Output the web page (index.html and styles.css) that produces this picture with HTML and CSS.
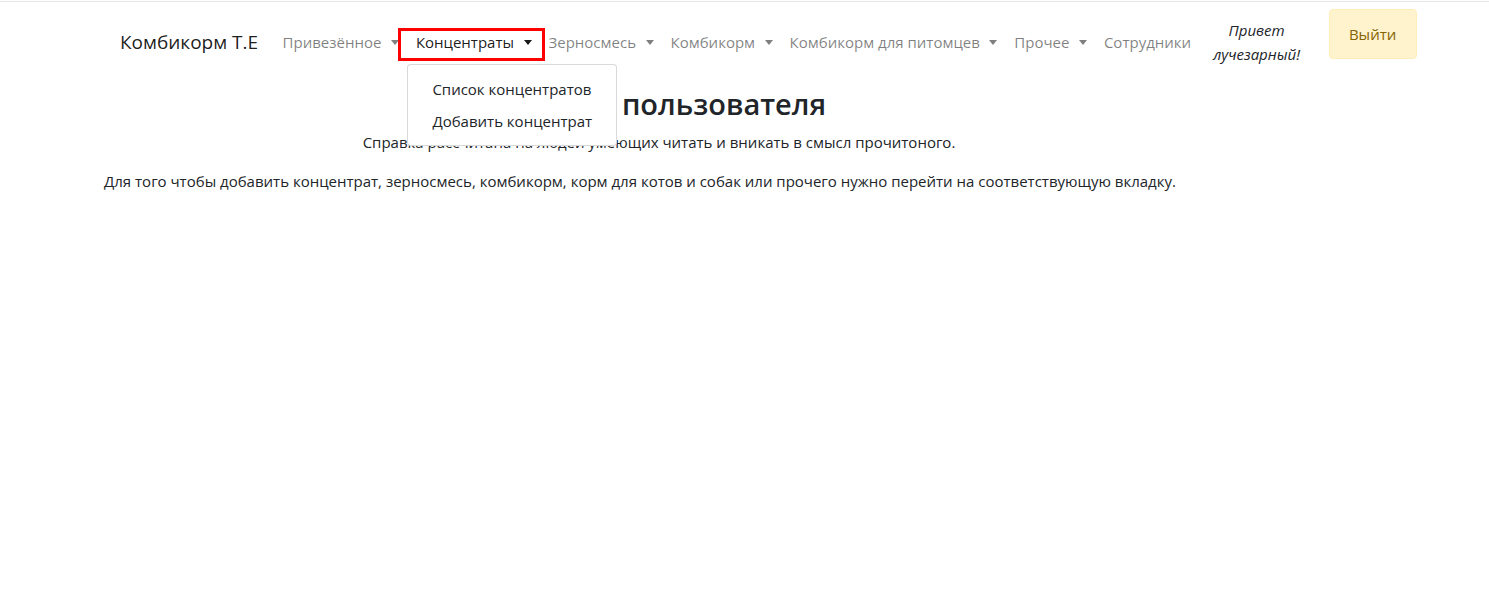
FILE: index.html
```html
<!DOCTYPE html>
<html lang="ru">
<head>
<meta charset="utf-8">
<title>Комбикорм Т.Е</title>
<link rel="stylesheet" href="styles.css">
</head>
<body>
<div class="app">
  <nav class="navbar">
    <a class="brand" href="#">Комбикорм Т.Е</a>
    <ul class="nav-links">
      <li class="nav-item"><a class="nav-link caret" href="#">Привезённое</a></li>
      <li class="nav-item open">
        <a class="nav-link caret active" href="#">Концентраты</a>
        <div class="dropdown-menu">
          <a class="dropdown-item" href="#">Список концентратов</a>
          <a class="dropdown-item" href="#">Добавить концентрат</a>
        </div>
      </li>
      <li class="nav-item"><a class="nav-link caret" href="#">Зерносмесь</a></li>
      <li class="nav-item"><a class="nav-link caret" href="#">Комбикорм</a></li>
      <li class="nav-item"><a class="nav-link caret" href="#">Комбикорм для питомцев</a></li>
      <li class="nav-item"><a class="nav-link caret" href="#">Прочее</a></li>
      <li class="nav-item"><a class="nav-link" href="#">Сотрудники</a></li>
    </ul>
    <div class="greeting">Привет<br>лучезарный!</div>
    <button class="btn-logout" type="button">Выйти</button>
  </nav>
  <main class="content">
    <h2 class="title">Справка пользователя</h2>
    <p class="subtitle">Справка рассчитана на людей умеющих читать и вникать в смысл прочитоного.</p>
    <p class="text">Для того чтобы добавить концентрат, зерносмесь, комбикорм, корм для котов и собак или прочего нужно перейти на соответствующую вкладку.</p>
  </main>
</div>
</body>
</html>
```

FILE: styles.css
```css
html, body {
  margin: 0;
  padding: 0;
  background: #fff;
}
body {
  padding-top: 1px;
  font-family: "Open Sans", "Noto Sans", "Liberation Sans", sans-serif;
  font-size: 15px;
  line-height: 24px;
  color: #212529;
}
.app {
  border-top: 1px solid #e6e6e6;
}
.navbar {
  display: flex;
  align-items: flex-start;
  padding: 7px 0 0 120px;
}
.brand {
  margin-top: 20px;
  font-size: 19px;
  line-height: 26px;
  color: rgba(0, 0, 0, 0.9);
  text-decoration: none;
  margin-right: 16px;
}
.nav-links {
  list-style: none;
  display: flex;
  margin: 13px 0 0 0;
  padding: 0;
}
.nav-item {
  position: relative;
}
.nav-link {
  display: block;
  padding: 8px 8.5px;
  color: rgba(0, 0, 0, 0.5);
  text-decoration: none;
  position: relative;
}
.nav-link.active {
  color: rgba(0, 0, 0, 0.9);
}
.caret::after {
  content: "";
  display: inline-block;
  margin-left: 9.5px;
  vertical-align: 3px;
  border-top: 5px solid currentColor;
  border-left: 4.5px solid transparent;
  border-right: 4.5px solid transparent;
}
.nav-link.caret::after {
  border-top-color: rgba(0, 0, 0, 0.5);
}
.nav-link.active::after {
  border-top-color: rgba(0, 0, 0, 0.9);
}
.nav-link.active::before {
  content: "";
  position: absolute;
  left: -9px;
  right: -5px;
  top: 6px;
  bottom: 1px;
  border: 3px solid #ff0000;
  pointer-events: none;
}
.dropdown-menu {
  position: absolute;
  top: 42px;
  left: 0;
  width: 208px;
  padding: 8px 0;
  background: #fff;
  border: 1px solid rgba(0, 0, 0, 0.15);
  border-radius: 4px;
  z-index: 10;
}
.dropdown-item {
  display: block;
  padding: 4px 24px;
  color: #212529;
  text-decoration: none;
  white-space: nowrap;
}
.greeting {
  margin: 9px 0 0 2px;
  width: 110px;
  text-align: center;
  font-style: italic;
  color: #212529;
}
.btn-logout {
  margin-left: 17px;
  width: 88px;
  height: 50px;
  background: #fff3cd;
  border: 1px solid #ffeeba;
  border-radius: 4px;
  color: #856404;
  font-family: inherit;
  font-size: 15px;
  cursor: pointer;
}
.content {
  width: 1110px;
  padding: 0 15px;
  margin-left: 89px;
  margin-top: 19px;
}
.title {
  margin: 0 0 7px 0;
  text-align: center;
  font-size: 29px;
  line-height: 38px;
  font-weight: 600;
  color: #212529;
}
.subtitle {
  margin: 0 0 15px 0;
  text-align: center;
}
.text {
  margin: 0;
}
```
